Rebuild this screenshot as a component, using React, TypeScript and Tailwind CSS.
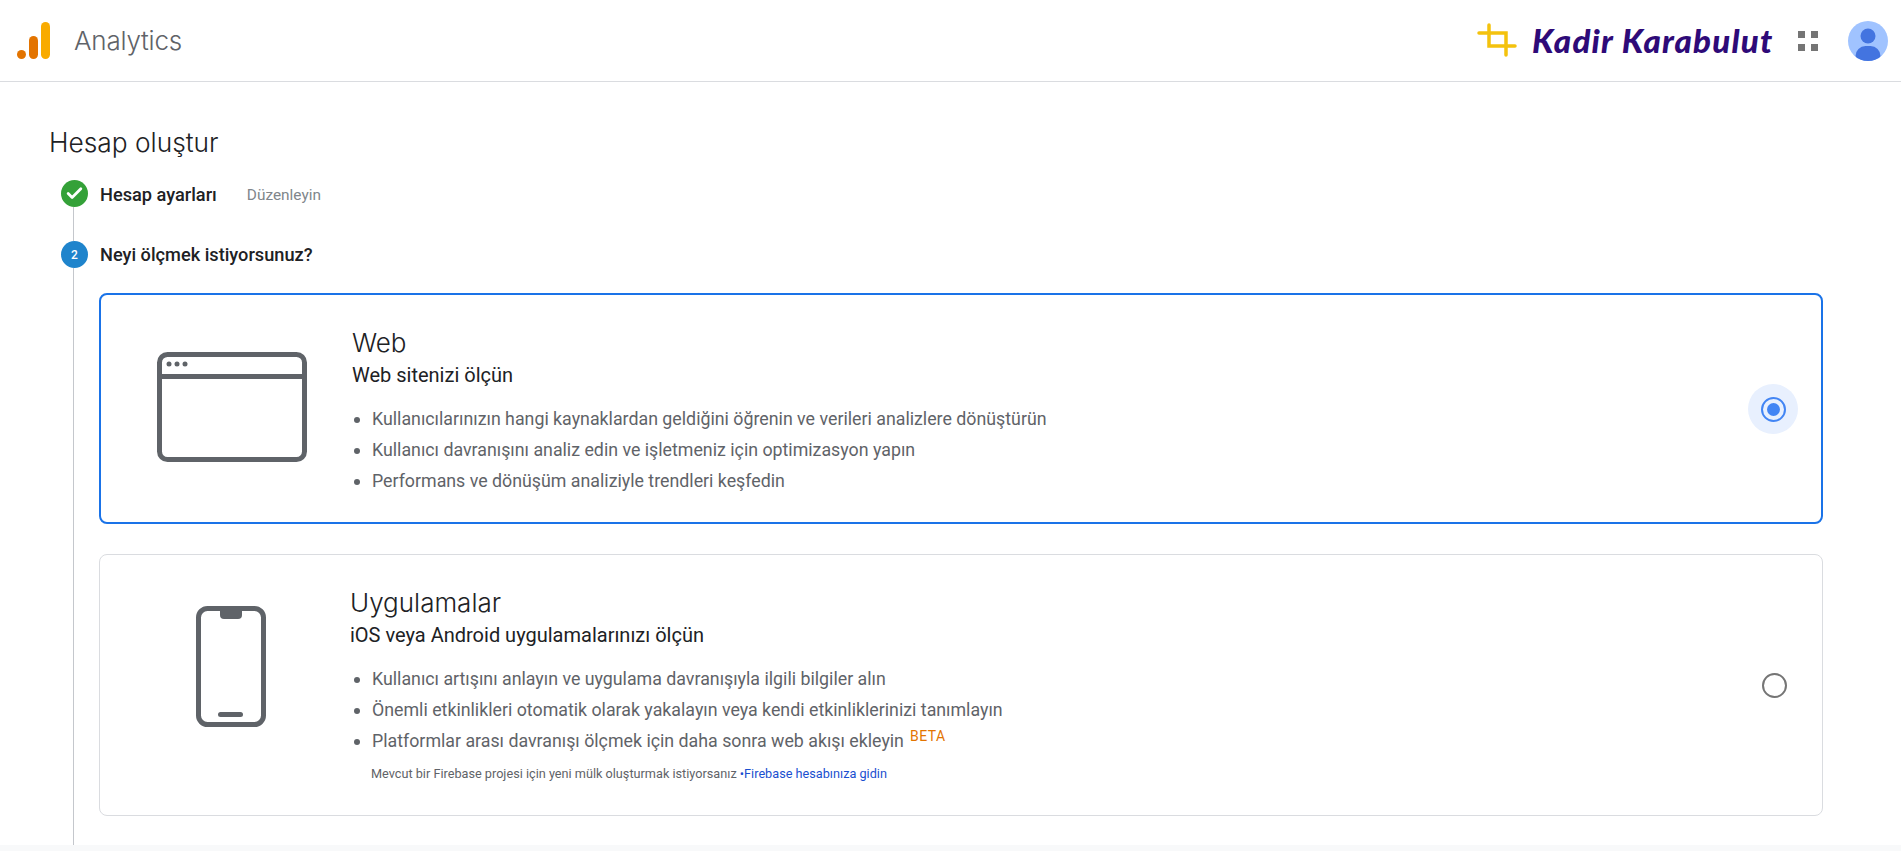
import { Check } from "lucide-react";

const webItems = [
    "Kullanıcılarınızın hangi kaynaklardan geldiğini öğrenin ve verileri analizlere dönüştürün",
    "Kullanıcı davranışını analiz edin ve işletmeniz için optimizasyon yapın",
    "Performans ve dönüşüm analiziyle trendleri keşfedin",
];

const appItems = [
    "Kullanıcı artışını anlayın ve uygulama davranışıyla ilgili bilgiler alın",
    "Önemli etkinlikleri otomatik olarak yakalayın veya kendi etkinliklerinizi tanımlayın",
];

function AnalyticsLogo() {
    return (
        <svg width="33" height="38" viewBox="0 0 33 38" fill="none">
            <circle cx="4.5" cy="32.5" r="4.5" fill="#e37400" />
            <rect x="12" y="14" width="9" height="23" rx="4.5" fill="#e37400" />
            <rect x="24" y="0" width="9" height="37" rx="4.5" fill="#f9ab00" />
        </svg>
    );
}

function CropIcon() {
    return (
        <svg width="40" height="35" viewBox="0 0 40 35" fill="none" stroke="#f4c20d" strokeWidth="3.5" strokeLinecap="round">
            <path d="M2 10 H29 V32" />
            <path d="M12 2 V23 H38" />
        </svg>
    );
}

function GridIcon() {
    return (
        <svg width="20" height="20" viewBox="0 0 20 20" fill="#757575">
            <rect x="0" y="0" width="7" height="7" />
            <rect x="13" y="0" width="7" height="7" />
            <rect x="0" y="13" width="7" height="7" />
            <rect x="13" y="13" width="7" height="7" />
        </svg>
    );
}

function UserAvatar() {
    return (
        <svg width="40" height="40" viewBox="0 0 40 40">
            <defs>
                <clipPath id="avatar-clip">
                    <circle cx="20" cy="20" r="20" />
                </clipPath>
            </defs>
            <g clipPath="url(#avatar-clip)">
                <rect width="40" height="40" fill="#a0c3ff" />
                <circle cx="20" cy="15" r="7.5" fill="#4374e0" />
                <rect x="7.5" y="25" width="25" height="20" rx="10" fill="#4374e0" />
            </g>
        </svg>
    );
}

function BrowserIcon() {
    return (
        <svg width="150" height="110" viewBox="0 0 150 110" fill="none">
            <rect x="2.5" y="2.5" width="145" height="105" rx="8" stroke="#5f6368" strokeWidth="5" />
            <path d="M3 24.5 H147" stroke="#5f6368" strokeWidth="5" />
            <circle cx="12" cy="12" r="2.5" fill="#5f6368" />
            <circle cx="20" cy="12" r="2.5" fill="#5f6368" />
            <circle cx="28" cy="12" r="2.5" fill="#5f6368" />
        </svg>
    );
}

function PhoneIcon() {
    return (
        <svg width="70" height="121" viewBox="0 0 70 121" fill="none">
            <rect x="2.5" y="2.5" width="65" height="116" rx="9" stroke="#5f6368" strokeWidth="5" />
            <path d="M24 3 H46 V9 A4 4 0 0 1 42 13 H28 A4 4 0 0 1 24 9 Z" fill="#5f6368" />
            <rect x="22" y="106" width="25" height="5" rx="2.5" fill="#5f6368" />
        </svg>
    );
}

function Bullet({ children }: { children: React.ReactNode }) {
    return (
        <li className="flex h-[31px] items-center text-[17.8px] text-[#5f6368]">
            <span className="mr-[12px] ml-[1px] h-[6px] w-[6px] shrink-0 rounded-full bg-[#5f6368]" />
            {children}
        </li>
    );
}

export default function App() {
    return (
        <div className="flex h-[851px] flex-col overflow-hidden bg-white font-['Roboto',sans-serif] text-[#202124]">
            <header className="flex h-[82px] shrink-0 items-center border-b border-[#dadce0] pr-[13px] pl-[17px]">
                <AnalyticsLogo />
                <span className="ml-[24px] font-['Inter',sans-serif] text-[26px] font-[350] tracking-[-0.2px] text-[#5f6368]">Analytics</span>

                <div className="ml-auto flex items-center">
                    <CropIcon />
                    <span className="ml-[15px] w-[245px] font-['Lato',sans-serif] text-[33px] leading-none font-black tracking-[1.2px] whitespace-nowrap text-[#2e0a78] italic">
                        Kadir Karabulut
                    </span>
                    <div className="ml-[21px]">
                        <GridIcon />
                    </div>
                    <div className="ml-[30px]">
                        <UserAvatar />
                    </div>
                </div>
            </header>

            <main className="flex flex-1 flex-col pt-[44px] pl-[49px]">
                <h1 className="font-['Inter',sans-serif] text-[26.3px] leading-[34px] font-[350]">Hesap oluştur</h1>

                <div className="mt-[20px] flex items-center pl-[12px]">
                    <span className="flex h-[27px] w-[27px] items-center justify-center rounded-full bg-[#34a138] text-white">
                        <Check size={19} strokeWidth={3.5} />
                    </span>
                    <span className="relative top-[1px] ml-[12px] text-[18.2px] leading-[24px] font-medium">Hesap ayarları</span>
                    <span className="relative top-[1px] ml-[30px] text-[15.4px] leading-[24px] text-[#80868b]">Düzenleyin</span>
                </div>

                <div className="ml-[24px] h-[34px] w-px bg-[#c4c7cc]" />

                <div className="flex items-center pl-[12px]">
                    <span className="flex h-[27px] w-[27px] items-center justify-center rounded-full bg-[#1f84cc] text-[12px] font-medium text-white">
                        2
                    </span>
                    <span className="ml-[12px] text-[18.2px] leading-[24px] font-medium">Neyi ölçmek istiyorsunuz?</span>
                </div>

                <div className="flex flex-1">
                    <div className="ml-[24px] w-px bg-[#c4c7cc]" />

                    <div className="ml-[25px] flex w-[1724px] flex-col pt-[25px]">
                        <section className="flex h-[231px] items-start rounded-[8px] border-2 border-[#1a73e8] pr-[23px]">
                            <div className="mt-[57px] ml-[56px] shrink-0">
                                <BrowserIcon />
                            </div>
                            <div className="mt-[31px] ml-[45px] flex-1">
                                <h2 className="font-['Inter',sans-serif] text-[26px] leading-[34px] font-[350]">Web</h2>
                                <p className="mt-[2px] text-[20px] leading-[26px]">Web sitenizi ölçün</p>
                                <ul className="mt-[16px] ml-[1px]">
                                    {webItems.map((item) => (
                                        <Bullet key={item}>{item}</Bullet>
                                    ))}
                                </ul>
                            </div>
                            <div className="mt-[89px] flex h-[50px] w-[50px] items-center justify-center rounded-full bg-[#e8f0fe]">
                                <div className="flex h-[25px] w-[25px] items-center justify-center rounded-full border-2 border-[#4285f4]">
                                    <div className="h-[13px] w-[13px] rounded-full bg-[#4285f4]" />
                                </div>
                            </div>
                        </section>

                        <section className="mt-[30px] flex h-[262px] items-start rounded-[8px] border border-[#dadce0] pr-[35px]">
                            <div className="mt-[51px] ml-[96px] shrink-0">
                                <PhoneIcon />
                            </div>
                            <div className="mt-[31px] ml-[84px] flex-1">
                                <h2 className="font-['Inter',sans-serif] text-[26px] leading-[34px] font-[350]">Uygulamalar</h2>
                                <p className="mt-[2px] text-[20px] leading-[26px]">iOS veya Android uygulamalarınızı ölçün</p>
                                <ul className="mt-[16px] ml-[3px]">
                                    {appItems.map((item) => (
                                        <Bullet key={item}>{item}</Bullet>
                                    ))}
                                    <Bullet>
                                        Platformlar arası davranışı ölçmek için daha sonra web akışı ekleyin
                                        <span className="relative -top-[5px] ml-[6px] text-[14px] tracking-[0.5px] text-[#e37400]">BETA</span>
                                    </Bullet>
                                </ul>
                                <p className="mt-[9px] ml-[21px] text-[12.7px] leading-[16px] text-[#5f6368]">
                                    Mevcut bir Firebase projesi için yeni mülk oluşturmak istiyorsanız{" "}
                                    <span className="text-[#1a4fd0]">•Firebase hesabınıza gidin</span>
                                </p>
                            </div>
                            <div className="mt-[118px] h-[25px] w-[25px] rounded-full border-2 border-[#757575]" />
                        </section>
                    </div>
                </div>
            </main>

            <div className="h-[6px] shrink-0 bg-[#f8f9fa]" />
        </div>
    );
}
